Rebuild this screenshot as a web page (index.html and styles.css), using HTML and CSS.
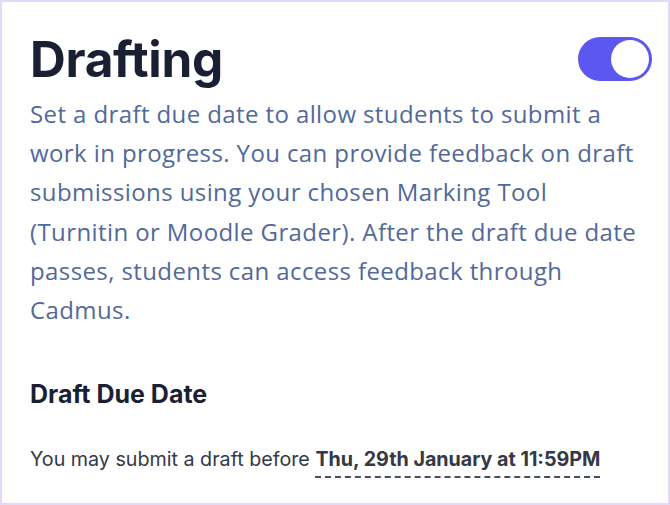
FILE: index.html
```html
<!DOCTYPE html>
<html lang="en">
<head>
<meta charset="utf-8">
<link rel="stylesheet" href="styles.css">
</head>
<body>
<section class="card">
  <header class="head">
    <h1 class="title">Drafting</h1>
    <span class="toggle" role="switch" aria-checked="true"><span class="knob"></span></span>
  </header>
  <p class="desc">Set a draft due date to allow students to submit a work in progress. You can provide feedback on draft submissions using your chosen Marking Tool (Turnitin or Moodle Grader). After the draft due date passes, students can access feedback through Cadmus.</p>
  <h2 class="sub">Draft Due Date</h2>
  <p class="note">You may submit a draft before <span class="date">Thu, 29th January at 11:59PM</span></p>
</section>
</body>
</html>
```
FILE: styles.css
```css
html, body { margin: 0; padding: 0; background: #fff; }
body { width: 670px; height: 505px; overflow: hidden; }
.card {
  box-sizing: border-box;
  width: 670px;
  height: 505px;
  border: 2px solid #e3d9fb;
  padding: 25px 16px 0 28px;
  font-family: "Inter", "Liberation Sans", sans-serif;
}
.head {
  display: flex;
  justify-content: space-between;
  align-items: center;
}
.title {
  margin: 0;
  font-size: 49.5px;
  font-weight: 700;
  color: #1b1f33;
  line-height: 64px;
  letter-spacing: -0.3px;
}
.toggle {
  width: 74px;
  height: 44px;
  border-radius: 22px;
  background: #5b57f0;
  display: flex;
  align-items: center;
  justify-content: flex-end;
  padding: 3px;
  box-sizing: border-box;
}
.knob {
  width: 38px;
  height: 38px;
  border-radius: 50%;
  background: #fff;
}
.desc {
  margin: 3px 0 0;
  font-family: "Open Sans", sans-serif;
  font-size: 24px;
  letter-spacing: 0.4px;
  line-height: 39.2px;
  color: #52699a;
}
.sub {
  margin: 48px 0 0;
  font-size: 25px;
  font-weight: 700;
  color: #1b1f33;
  line-height: 34px;
}
.note {
  margin: 33px 0 0;
  font-size: 19.7px;
  color: #343847;
  line-height: 30px;
}
.date {
  font-weight: 700;
  border-bottom: 2px dashed #4a4e5c;
  padding-bottom: 5px;
}
```
